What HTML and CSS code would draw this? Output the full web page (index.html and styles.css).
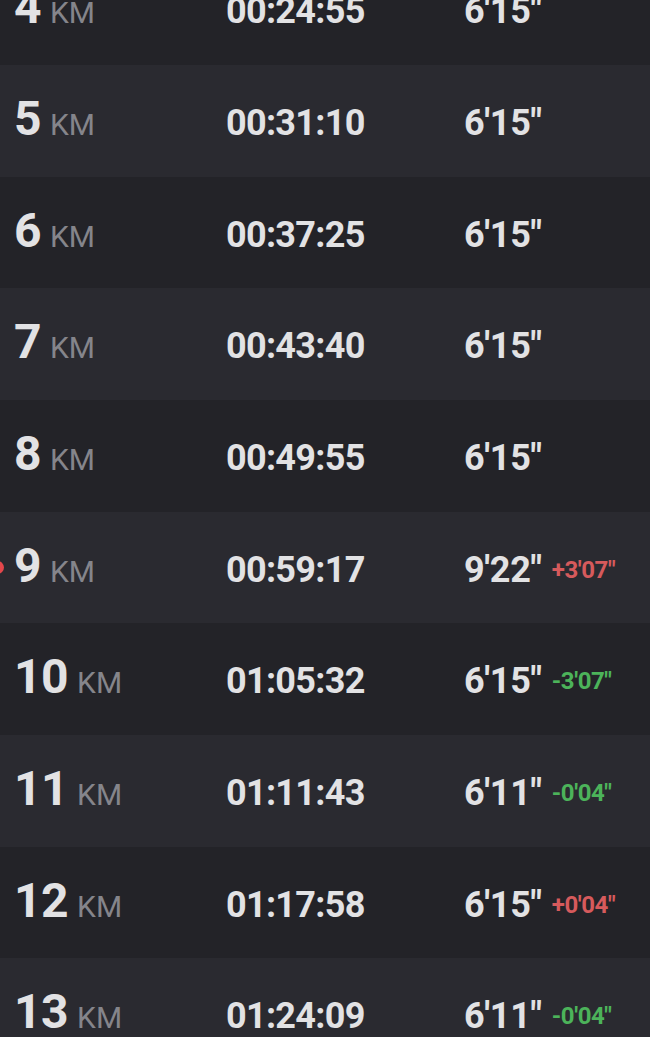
FILE: index.html
```html
<!DOCTYPE html>
<html>
<head>
<meta charset="utf-8">
<link rel="stylesheet" href="styles.css">
</head>
<body>
<div class="splits">
  <div class="row dark"><div class="km"><span class="num">4</span><span class="unit">KM</span></div><div class="time">00:24:55</div><div class="pace"><span class="pv">6'15"</span></div></div>
  <div class="row light"><div class="km"><span class="num">5</span><span class="unit">KM</span></div><div class="time">00:31:10</div><div class="pace"><span class="pv">6'15"</span></div></div>
  <div class="row dark"><div class="km"><span class="num">6</span><span class="unit">KM</span></div><div class="time">00:37:25</div><div class="pace"><span class="pv">6'15"</span></div></div>
  <div class="row light"><div class="km"><span class="num">7</span><span class="unit">KM</span></div><div class="time">00:43:40</div><div class="pace"><span class="pv">6'15"</span></div></div>
  <div class="row dark"><div class="km"><span class="num">8</span><span class="unit">KM</span></div><div class="time">00:49:55</div><div class="pace"><span class="pv">6'15"</span></div></div>
  <div class="row light marked"><span class="dot"></span><div class="km"><span class="num">9</span><span class="unit">KM</span></div><div class="time">00:59:17</div><div class="pace"><span class="pv">9'22"</span><span class="delta up">+3'07"</span></div></div>
  <div class="row dark"><div class="km"><span class="num">10</span><span class="unit">KM</span></div><div class="time">01:05:32</div><div class="pace"><span class="pv">6'15"</span><span class="delta down">-3'07"</span></div></div>
  <div class="row light"><div class="km"><span class="num">11</span><span class="unit">KM</span></div><div class="time">01:11:43</div><div class="pace"><span class="pv">6'11"</span><span class="delta down">-0'04"</span></div></div>
  <div class="row dark"><div class="km"><span class="num">12</span><span class="unit">KM</span></div><div class="time">01:17:58</div><div class="pace"><span class="pv">6'15"</span><span class="delta up">+0'04"</span></div></div>
  <div class="row light"><div class="km"><span class="num">13</span><span class="unit">KM</span></div><div class="time">01:24:09</div><div class="pace"><span class="pv">6'11"</span><span class="delta down">-0'04"</span></div></div>
</div>
</body>
</html>
```

FILE: styles.css
```css
html, body {
  margin: 0;
  padding: 0;
  background: #232328;
  overflow: hidden;
}
body {
  font-family: Roboto, "Noto Sans", sans-serif;
  color: #e2e2e4;
}
.splits {
  margin-top: -46.67px;
}
.row {
  position: relative;
  box-sizing: border-box;
  height: 111.67px;
  padding: 30px 0 0 14px;
  display: grid;
  grid-template-columns: 212px 238px auto;
  align-items: baseline;
  line-height: 1;
}
.dark { background: #232328; }
.light { background: #2a2a30; }
.km {
  display: flex;
  align-items: baseline;
  gap: 9px;
}
.num {
  font-size: 48px;
  font-weight: 700;
  letter-spacing: -0.5px;
  color: #e2e2e4;
}
.unit {
  font-size: 30px;
  font-weight: 400;
  color: #85858b;
}
.time {
  font-size: 36px;
  font-weight: 700;
  letter-spacing: -0.7px;
}
.pace {
  display: flex;
  align-items: center;
  gap: 10px;
}
.pv {
  font-size: 36px;
  font-weight: 700;
  letter-spacing: -0.3px;
}
.delta {
  font-size: 24px;
  font-weight: 700;
  letter-spacing: -0.4px;
}
.up { color: #d65a5c; }
.down { color: #4cb35a; }
.dot {
  position: absolute;
  left: -9px;
  top: 49px;
  width: 13px;
  height: 13px;
  border-radius: 50%;
  background: #e4474b;
}
```
